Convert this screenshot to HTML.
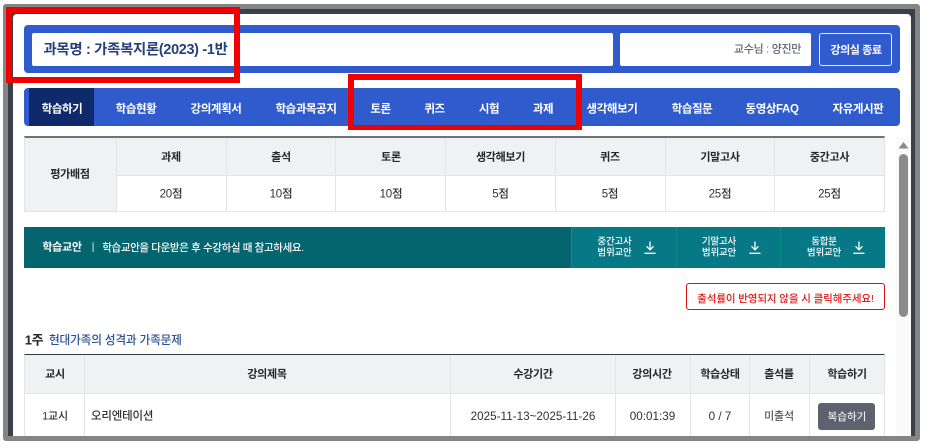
<!DOCTYPE html>
<html lang="ko"><head><meta charset="utf-8"><style>
html,body{margin:0;padding:0;background:#fff}
body{width:934px;height:448px;overflow:hidden;position:relative;font-family:"Liberation Sans","Noto Sans CJK KR",sans-serif;color:#2a2d33}
div,span{position:absolute;box-sizing:border-box}
.t{white-space:nowrap;transform:translate(-50%,calc(-50% + 2px));font-size:11px;line-height:1;filter:blur(.3px)}
.n{color:#fff;font-weight:700;font-size:11.5px;top:107.5px;letter-spacing:-.4px}
.h{font-weight:700;font-size:11px;color:#24262b;letter-spacing:-.3px}
.v{font-size:11.5px;color:#2f3238;font-weight:500;letter-spacing:-.2px}
.b{background:#e2e4e7}
.d{color:#fff;font-size:9.5px;font-weight:500;letter-spacing:-.2px}
</style></head><body>
<div style="left:3px;top:4px;width:917px;height:437px;background:#858585;border-radius:3px"></div>
<div style="left:8px;top:9px;width:907px;height:427px;background:#3a3f4a"></div>
<div style="left:13px;top:14px;width:898px;height:422px;background:#fff;border-radius:4px 4px 0 0"></div>

<div style="left:24px;top:25px;width:876px;height:48px;background:#2f5bcc;border-radius:4px"></div>
<div style="left:32px;top:33px;width:581px;height:33px;background:#fff;border-radius:2px"></div>
<div style="left:620px;top:33px;width:191px;height:33px;background:#fff;border-radius:2px"></div>
<div style="left:819px;top:33px;width:73px;height:33px;border:1px solid #e6ecfa;border-radius:3px"></div>
<span class="t" style="left:135.5px;top:48px;font-size:14.4px;font-weight:700;color:#243f7d;letter-spacing:-.3px">과목명 : 가족복지론(2023) -1반</span>
<span class="t" style="left:767.5px;top:48px;font-size:11px;color:#5d6470;font-weight:500;letter-spacing:-.3px">교수님 : 양진만</span>
<span class="t" style="left:856px;top:49px;font-size:11px;color:#fff;font-weight:700;letter-spacing:-.4px">강의실 종료</span>

<div style="left:24px;top:88px;width:876px;height:38px;background:#2f5bcc;border-radius:4px"></div>
<div style="left:29px;top:88px;width:65px;height:38px;background:#0f2a6b"></div>
<span class="t n" style="left:62px">학습하기</span>
<span class="t n" style="left:136px">학습현황</span>
<span class="t n" style="left:216px">강의계획서</span>
<span class="t n" style="left:306px">학습과목공지</span>
<span class="t n" style="left:380.5px">토론</span>
<span class="t n" style="left:434.5px">퀴즈</span>
<span class="t n" style="left:489px">시험</span>
<span class="t n" style="left:543px">과제</span>
<span class="t n" style="left:612px">생각해보기</span>
<span class="t n" style="left:692px">학습질문</span>
<span class="t n" style="left:772px">동영상FAQ</span>
<span class="t n" style="left:858px">자유게시판</span>

<!-- eval table -->
<div style="left:24px;top:136px;width:861px;height:76px;background:#fff;border:1px solid #e2e4e7;border-top:2px solid #6d7480"></div>
<div style="left:25px;top:138px;width:859px;height:38px;background:#f0f1f3"></div>
<div style="left:25px;top:138px;width:92px;height:73px;background:#f0f1f3"></div>
<div class="b" style="left:117px;top:175px;width:767px;height:1px"></div>
<div class="b" style="left:116px;top:138px;width:1px;height:73px"></div>
<div class="b" style="left:226px;top:138px;width:1px;height:73px"></div>
<div class="b" style="left:335px;top:138px;width:1px;height:73px"></div>
<div class="b" style="left:445px;top:138px;width:1px;height:73px"></div>
<div class="b" style="left:555px;top:138px;width:1px;height:73px"></div>
<div class="b" style="left:665px;top:138px;width:1px;height:73px"></div>
<div class="b" style="left:774px;top:138px;width:1px;height:73px"></div>
<span class="t h" style="left:70px;top:173px">평가배점</span>
<span class="t h" style="left:171px;top:156px">과제</span>
<span class="t h" style="left:281px;top:156px">출석</span>
<span class="t h" style="left:391px;top:156px">토론</span>
<span class="t h" style="left:500.5px;top:156px">생각해보기</span>
<span class="t h" style="left:610px;top:156px">퀴즈</span>
<span class="t h" style="left:720px;top:156px">기말고사</span>
<span class="t h" style="left:829.5px;top:156px">중간고사</span>
<span class="t v" style="left:171px;top:192.5px">20점</span>
<span class="t v" style="left:281px;top:192.5px">10점</span>
<span class="t v" style="left:391px;top:192.5px">10점</span>
<span class="t v" style="left:500.5px;top:192.5px">5점</span>
<span class="t v" style="left:610px;top:192.5px">5점</span>
<span class="t v" style="left:720px;top:192.5px">25점</span>
<span class="t v" style="left:829.5px;top:192.5px">25점</span>

<!-- teal -->
<div style="left:24px;top:227px;width:861px;height:41px;background:#05656e"></div>
<div style="left:571px;top:227px;width:314px;height:41px;background:#067886"></div>
<div style="left:571px;top:227px;width:1px;height:41px;background:#0b8f85"></div>
<div style="left:676px;top:227px;width:1px;height:41px;background:#0b8f85"></div>
<div style="left:780px;top:227px;width:1px;height:41px;background:#0b8f85"></div>
<span class="t" style="left:62px;top:246px;color:#fff;font-weight:700;font-size:11px;letter-spacing:-.3px">학습교안</span>
<span class="t" style="left:93px;top:246px;color:#fff;font-size:10px">|</span>
<span class="t" style="left:203px;top:246px;color:#fff;font-size:10.5px;font-weight:500;letter-spacing:-.35px">학습교안을 다운받은 후 수강하실 때 참고하세요.</span>
<span class="t d" style="left:614.5px;top:240px">중간고사</span>
<span class="t d" style="left:614.5px;top:251px">범위교안</span>
<span class="t d" style="left:719px;top:240px">기말고사</span>
<span class="t d" style="left:719px;top:251px">범위교안</span>
<span class="t d" style="left:824px;top:240px">동합분</span>
<span class="t d" style="left:824px;top:251px">범위교안</span>
<svg style="position:absolute;left:644px;top:241px" width="12" height="14" viewBox="0 0 12 14" fill="none" stroke="#fff" stroke-width="1.3"><path d="M6 0.5V8.5M2.5 5.3L6 8.8L9.5 5.3M0.5 12.3H11.5"/></svg>
<svg style="position:absolute;left:749px;top:241px" width="12" height="14" viewBox="0 0 12 14" fill="none" stroke="#fff" stroke-width="1.3"><path d="M6 0.5V8.5M2.5 5.3L6 8.8L9.5 5.3M0.5 12.3H11.5"/></svg>
<svg style="position:absolute;left:853px;top:241px" width="12" height="14" viewBox="0 0 12 14" fill="none" stroke="#fff" stroke-width="1.3"><path d="M6 0.5V8.5M2.5 5.3L6 8.8L9.5 5.3M0.5 12.3H11.5"/></svg>

<!-- attendance -->
<div style="left:686px;top:283px;width:199px;height:27px;border:1px solid #dd1111;border-radius:3px;background:#fff"></div>
<span class="t" style="left:785.5px;top:296.5px;color:#e01515;font-size:10.5px;font-weight:500;letter-spacing:-.1px">출석률이 반영되지 않을 시 클릭해주세요!</span>

<span class="t" style="left:34px;top:338px;font-size:13px;font-weight:700;color:#23262b;letter-spacing:-.3px">1주</span>
<span class="t" style="left:49px;top:339px;transform:translate(0,calc(-50% + 2px));font-size:11.7px;font-weight:500;color:#2c5197;letter-spacing:-.2px">현대가족의 성격과 가족문제</span>

<!-- lecture table -->
<div style="left:24px;top:354px;width:861px;height:82px;border-left:1px solid #e2e4e7;border-right:1px solid #e2e4e7;border-top:1px solid #333a4a"></div>
<div style="left:25px;top:355px;width:859px;height:39px;background:#f0f1f3"></div>
<div class="b" style="left:25px;top:393px;width:859px;height:1px"></div>
<div class="b" style="left:84px;top:355px;width:1px;height:81px"></div>
<div class="b" style="left:450px;top:355px;width:1px;height:81px"></div>
<div class="b" style="left:615px;top:355px;width:1px;height:81px"></div>
<div class="b" style="left:690px;top:355px;width:1px;height:81px"></div>
<div class="b" style="left:749px;top:355px;width:1px;height:81px"></div>
<div class="b" style="left:809px;top:355px;width:1px;height:81px"></div>
<span class="t h" style="left:55px;top:373px">교시</span>
<span class="t h" style="left:267px;top:373px">강의제목</span>
<span class="t h" style="left:533px;top:373px">수강기간</span>
<span class="t h" style="left:652px;top:373px">강의시간</span>
<span class="t h" style="left:720px;top:373px">학습상태</span>
<span class="t h" style="left:779px;top:373px">출석률</span>
<span class="t h" style="left:847px;top:373px">학습하기</span>
<span class="t v" style="left:55px;top:415px;font-size:11px">1교시</span>
<span class="t v" style="left:91px;top:415px;transform:translate(0,calc(-50% + 2px))">오리엔테이션</span>
<span class="t v" style="left:533px;top:415px;font-size:11.7px;letter-spacing:0">2025-11-13~2025-11-26</span>
<span class="t v" style="left:652.5px;top:415px;font-size:11.7px;letter-spacing:0">00:01:39</span>
<span class="t v" style="left:720px;top:415px;font-size:11.7px;letter-spacing:0">0 / 7</span>
<span class="t v" style="left:779px;top:415px;color:#555;font-size:11px">미출석</span>
<div style="left:818px;top:403px;width:57px;height:27px;background:#5c636f;border-radius:3px"></div>
<span class="t" style="left:847px;top:415px;color:#e8eaed;font-size:10.5px;font-weight:500">복습하기</span>

<!-- scrollbar -->
<div style="left:896px;top:137px;width:15px;height:299px;background:#fafafa"></div>
<div style="left:899px;top:154px;width:9px;height:163px;background:#8b8b8b;border-radius:4.5px"></div>
<svg style="position:absolute;left:898px;top:141px" width="11" height="8" viewBox="0 0 11 8"><path d="M5.5 1L10.5 7.5H0.5Z" fill="#8b8b8b"/></svg>

<!-- red annotation boxes -->
<div style="left:6px;top:7px;width:234px;height:76px;border:6px solid #f00000"></div>
<div style="left:348px;top:74px;width:234px;height:56px;border:6px solid #f00000;border-width:6px 6px 5px 6px"></div>
</body></html>
